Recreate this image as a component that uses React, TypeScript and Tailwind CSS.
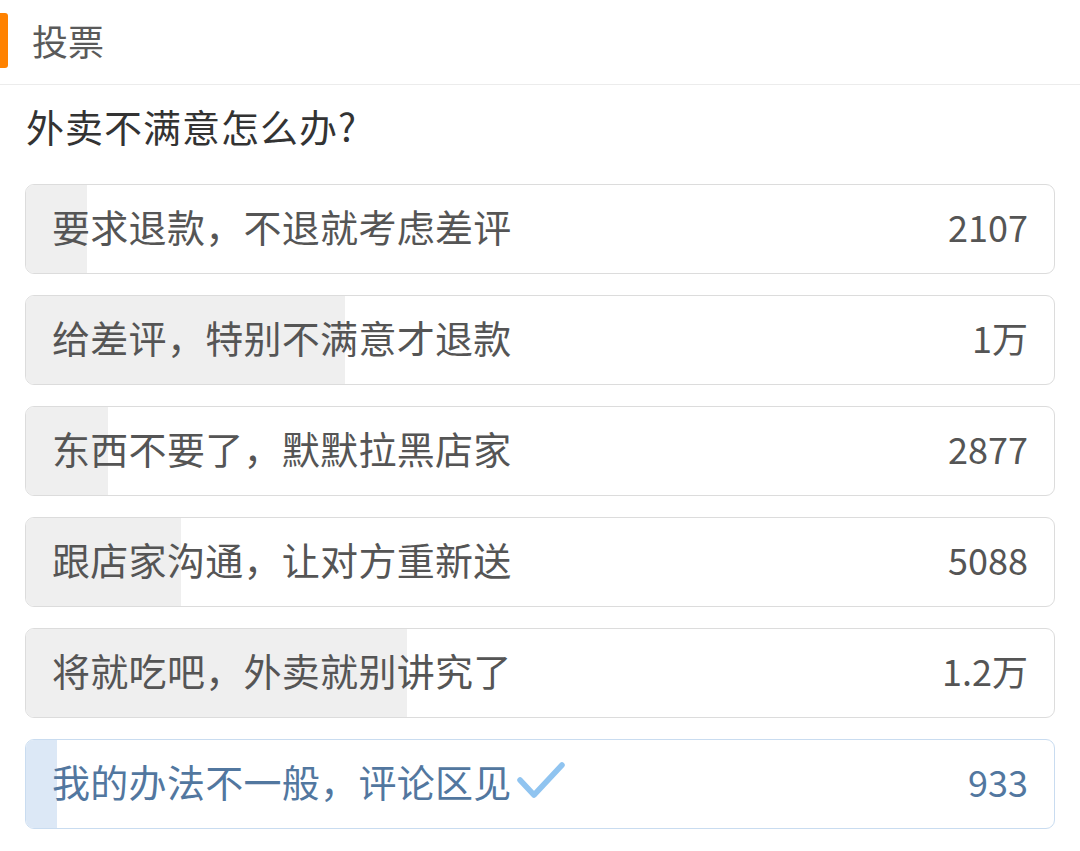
import React from 'react';

type Option = {
  label: string;
  count: string;
  fill: number;
  voted?: boolean;
};

const options: Option[] = [
  { label: '要求退款，不退就考虑差评', count: '2107', fill: 61 },
  { label: '给差评，特别不满意才退款', count: '1万', fill: 319 },
  { label: '东西不要了，默默拉黑店家', count: '2877', fill: 82 },
  { label: '跟店家沟通，让对方重新送', count: '5088', fill: 155 },
  { label: '将就吃吧，外卖就别讲究了', count: '1.2万', fill: 381 },
  { label: '我的办法不一般，评论区见', count: '933', fill: 31, voted: true },
];

const CheckMark: React.FC = () => (
  <svg width="50" height="40" viewBox="0 0 50 40" className="ml-[4px] shrink-0">
    <path
      d="M4 19 L18 34 L46 4"
      fill="none"
      stroke="#90c4f0"
      strokeWidth="5.5"
      strokeLinecap="round"
      strokeLinejoin="round"
    />
  </svg>
);

const OptionRow: React.FC<{ option: Option }> = ({ option }) => {
  const voted = option.voted;
  return (
    <div
      className={`relative h-[90px] rounded-[9px] border overflow-hidden bg-white ${
        voted ? 'border-[#c9dcf0]' : 'border-[#dcdcdc]'
      }`}
    >
      <div
        className={`absolute left-0 top-0 bottom-0 ${voted ? 'bg-[#dce8f6]' : 'bg-[#efefef]'}`}
        style={{ width: option.fill }}
      />
      <div className="relative flex h-full items-center justify-between pl-[26px] pr-[26px] pb-[6px]">
        <div className="flex items-center">
          <span
            className={`text-[38px] leading-none tracking-[0.3px] ${
              voted ? 'text-[#52779f]' : 'text-[#555555]'
            }`}
          >
            {option.label}
          </span>
          {voted && <CheckMark />}
        </div>
        <span className={`text-[36px] leading-none ${voted ? 'text-[#52779f]' : 'text-[#555555]'}`}>
          {option.count}
        </span>
      </div>
    </div>
  );
};

const App: React.FC = () => {
  return (
    <div
      className="w-[1080px] h-[851px] bg-white overflow-hidden"
      style={{ fontFamily: '"Noto Sans CJK SC", "Noto Sans", sans-serif' }}
    >
      <div className="flex h-[85px] items-center border-b border-[#ececec] pb-[4px]">
        <div className="h-[55px] w-[8px] rounded-r-[3px] bg-[#ff8200]" />
        <span className="ml-[24px] text-[36px] leading-none text-[#5a5a5a]">投票</span>
      </div>

      <div className="px-[25px]">
        <h1 className="mt-[22px] pl-[1px] text-[38px] leading-none tracking-[1px] text-[#333333]">
          外卖不满意怎么办?
        </h1>

        <div className="mt-[39px] flex flex-col gap-[21px] w-[1030px]">
          {options.map((o) => (
            <OptionRow key={o.label} option={o} />
          ))}
        </div>
      </div>
    </div>
  );
};

export default App;
